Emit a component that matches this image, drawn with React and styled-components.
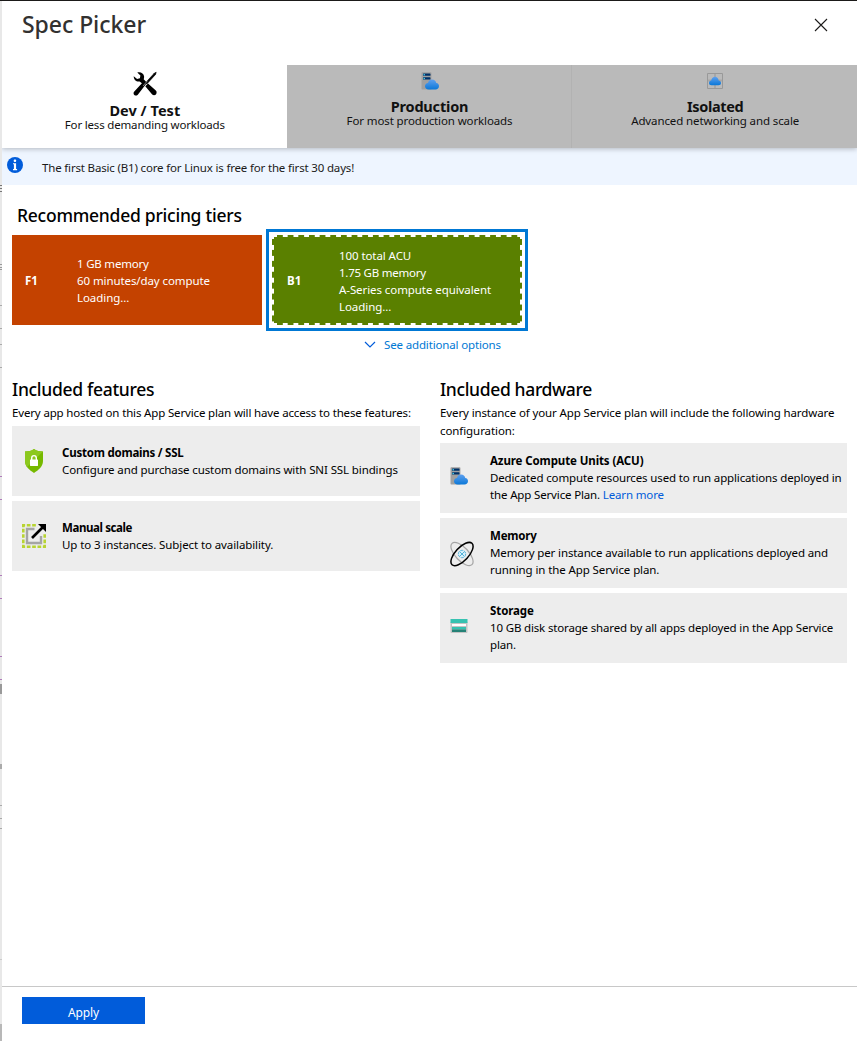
import React from "react";
import styled, { createGlobalStyle } from "styled-components";

const Global = createGlobalStyle`
  * { box-sizing: border-box; }
  html, body { margin: 0; padding: 0; background: #fff; }
  body { font-family: "Noto Sans", "Open Sans", sans-serif; font-size: 11.5px; color: #000; overflow: hidden; }
  h1, h2, h3, p { margin: 0; }
  button { font-family: inherit; }
`;

const underlay = [
  [185, 1, "#777"], [188, 1, "#777"], [191, 1, "#777"],
  [264, 1, "#999"], [267, 1, "#999"], [269, 1, "#999"],
  [305, 1, "#aaa"], [328, 1, "#aaa"], [344, 1, "#aaa"], [367, 1, "#aaa"],
  [476, 1, "#b07cba"], [499, 1, "#b07cba"], [575, 1, "#b07cba"], [598, 1, "#b07cba"],
  [656, 1, "#b07cba"], [679, 1, "#b07cba"], [684, 10, "#999"], [764, 5, "#aaa"],
  [805, 1, "#aaa"], [818, 1, "#aaa"], [828, 1, "#aaa"], [959, 1, "#ccc"], [1024, 17, "#b8b8b8"],
];

const stops = underlay
  .map(([y, h, c]) => `transparent ${y}px, ${c} ${y}px, ${c} ${y + h}px, transparent ${y + h}px`)
  .join(", ");

const Page = styled.div`
  display: flex;
  width: 857px;
  height: 1041px;
  border-top: 1px solid #1b1a19;
`;
const Edge = styled.div`
  flex: 0 0 2px;
  background: linear-gradient(to bottom, ${stops}) 0 -1px / 2px 1041px no-repeat, #e8e8e8;
`;
const Blade = styled.main`
  flex: 1;
  display: flex;
  flex-direction: column;
  background: #fff;
`;
const Header = styled.header`
  display: flex;
  justify-content: space-between;
  height: 64px;
  padding: 7px 29px 0 20px;
`;
const Title = styled.h1`
  font-size: 23px;
  line-height: 32px;
  font-weight: 500;
  color: #323130;
  letter-spacing: -0.05px;
`;
const CloseButton = styled.button`
  width: 14px;
  height: 14px;
  margin-top: 10px;
  padding: 0;
  border: 0;
  background: none;
  svg { display: block; }
`;
const Tabs = styled.nav`
  position: relative;
  display: flex;
  height: 83px;
  box-shadow: 0 1px 5px rgba(0, 0, 0, 0.25);
  clip-path: inset(0 0 -8px 0);
`;
const Tab = styled.button`
  flex: 1 0 0;
  display: flex;
  flex-direction: column;
  align-items: center;
  padding: ${(p) => (p.$active ? 6 : 7)}px 0 0 1px;
  border: 0;
  border-right: ${(p) => (p.$divider ? "1px solid #b2b2b2" : "0")};
  background: ${(p) => (p.$active ? "#fff" : "#bababa")};
  color: #111;
`;
const TabName = styled.span`
  margin-top: ${(p) => (p.$active ? 5 : 8)}px;
  font-size: 14.5px;
  font-weight: 700;
  line-height: 16px;
  letter-spacing: ${(p) => p.$ls || 0}px;
`;
const TabText = styled.span`
  margin-top: -1px;
  font-size: 11.5px;
  line-height: 16px;
  letter-spacing: ${(p) => p.$ls || 0}px;
`;
const Notice = styled.div`
  display: flex;
  align-items: flex-start;
  height: 37px;
  padding: 8px 0 0 5px;
  background: #eef5ff;
  svg { display: block; }
`;
const NoticeText = styled.span`
  margin: 3px 0 0 19px;
  line-height: 17px;
  color: #1b1a19;
  letter-spacing: -0.17px;
`;
const Content = styled.section`
  flex: 1;
  padding: 17px 10px 0;
`;
const Heading = styled.h2`
  font-size: 17.5px;
  line-height: 26px;
  font-weight: 500;
  color: #000;
  padding-left: ${(p) => p.$indent || 0}px;
  letter-spacing: ${(p) => p.$ls || 0}px;
`;
const Tiers = styled.div`
  display: flex;
  gap: 4px;
  margin-top: 1px;
`;
const TierFrame = styled.div`
  margin: ${(p) => (p.$selected ? "0" : "6px 0")};
  padding: ${(p) => (p.$selected ? "3px" : "0")};
  border: ${(p) => (p.$selected ? "3px solid #0078d4" : "0")};
`;
const Tier = styled.div`
  display: flex;
  align-items: center;
  width: 250px;
  height: 90px;
  color: #fff;
  background: ${(p) => p.$bg};
`;
const SelectedTier = styled(Tier)`
  padding: 0 2px;
  background:
    linear-gradient(to right, transparent 5.5px, #fff 5.5px) 5px 0 / 10.66px 2px repeat-x,
    linear-gradient(to right, transparent 5.5px, #fff 5.5px) 5px 100% / 10.66px 2px repeat-x,
    linear-gradient(to bottom, transparent 5.5px, #fff 5.5px) 0 4px / 2px 10.93px repeat-y,
    linear-gradient(to bottom, transparent 5.5px, #fff 5.5px) 100% 4px / 2px 10.93px repeat-y,
    ${(p) => p.$bg};
`;
const TierCode = styled.strong`
  width: 65px;
  padding-left: 13px;
  font-weight: 700;
  letter-spacing: 0;
`;
const TierSpecs = styled.div`
  display: flex;
  flex-direction: column;
  padding-top: ${(p) => p.$drop || 0}px;
`;
const Line = styled.span`
  display: block;
  line-height: 17px;
  white-space: nowrap;
  letter-spacing: ${(p) => p.$ls ?? -0.14}px;
`;
const More = styled.div`
  display: flex;
  align-items: center;
  gap: 8px;
  height: 17px;
  margin: 5px 0 0 352px;
  color: #0078d4;
`;
const Columns = styled.div`
  display: flex;
  justify-content: space-between;
  margin-top: 23px;
`;
const Column = styled.div`
  width: ${(p) => p.$w}px;
`;
const Intro = styled.div`
  margin: 2px 0 ${(p) => p.$gap}px;
`;
const IntroLine = styled(Line)`
  line-height: 18px;
`;
const Card = styled.article`
  display: flex;
  align-items: center;
  height: 70px;
  margin-bottom: 5px;
  padding-bottom: ${(p) => (p.$tall ? 1 : 0)}px;
  background: #ededed;
`;
const IconCell = styled.div`
  flex: 0 0 50px;
  padding: ${(p) => p.$drop || 0}px 0 ${(p) => p.$raise || 0}px 10px;
  svg { display: block; }
`;
const CardName = styled(Line)`
  font-weight: 700;
`;
const Link = styled.a`
  color: #015cda;
`;
const Footer = styled.footer`
  height: 55px;
  padding: 10px 20px;
  border-top: 1px solid #c8c8c8;
`;
const Apply = styled.button`
  display: block;
  width: 123px;
  height: 27px;
  padding: 4px 0 0;
  border: 0;
  background: #015cda;
  color: #fff;
  font-size: 12px;
  letter-spacing: -0.1px;
`;

const ToolsIcon = () => (
  <svg width="24" height="26" viewBox="0 0 24 26">
    <path d="M12.300 15.300 15 12.500l7.800 7.100c1.100 1 1.100 2.700.1 3.800s-2.700 1.100-3.700 0z" fill="#000" />
    <path d="M21.300 2.200 23.200 1.200l-.6 2.200L13.800 13l-1.300-1.200z" fill="#000" stroke="#000" strokeWidth=".6" />
    <path d="M4.300 1.400C7.700.6 10.900 2.300 11.100 5.600c.1 1-.1 1.900-.4 2.700l3.300 3.400L4.800 23.700c-1 1.100-2.500 1.200-3.500.3-1-1-1-2.500 0-3.500l7.600-8.200-2.300-1.900C3.800 11.200.8 9 .7 5.200l3.400 2.700L6.900 7.200l.5-2.800z" fill="#000" />
    <path d="M14.500 9.800 10 15" stroke="#fff" strokeWidth=".5" />
  </svg>
);

const ServerCloud = ({ id }) => (
  <svg width="18" height="18" viewBox="0 0 18 18">
    <defs>
      <linearGradient id={id} x1="0" y1="0" x2="0" y2="1">
        <stop offset="0" stopColor="#5ea0ef" />
        <stop offset="1" stopColor="#0b78d8" />
      </linearGradient>
    </defs>
    <path d="M.5 1Q.5.300 1.200.3H9.700Q10.400.3 10.400 1V17.500H1.200Q.5 17.500 .5 16.800z" fill="#a0a0a0" />
    <rect x="2" y="1.500" width="7.500" height="2.300" rx=".6" fill="#003067" />
    <rect x="2" y="5.300" width="7.500" height="2.300" rx=".6" fill="#003067" />
    <circle cx="3.200" cy="2.650" r=".75" fill="#50e6ff" />
    <circle cx="3.200" cy="6.450" r=".75" fill="#50e6ff" />
    <path d="M7.600 17.500C5.500 17.500 4 16 4 14.200c0-1.900 1.300-3.100 3-3.300C7.500 8.700 9.100 7.500 11.100 7.500c2.200 0 3.700 1.300 4.200 3.400 1.700.2 2.700 1.600 2.700 3.200 0 2-1.500 3.400-3.500 3.400z" fill={`url(#${id})`} />
  </svg>
);

const IsolatedIcon = () => (
  <svg width="18" height="18" viewBox="0 0 18 18">
    <defs>
      <linearGradient id="iso" x1="0" y1="0" x2="0" y2="1">
        <stop offset="0" stopColor="#5ea0ef" />
        <stop offset="1" stopColor="#0b78d8" />
      </linearGradient>
    </defs>
    <path d="M9 1v16M1 8.500h16" stroke="#a8a8a8" strokeWidth="2" />
    <path d="M1.500 1.500h15v15h-15z" stroke="#999" fill="none" />
    <path d="M5.500 13.200C4 13.200 3 12.200 3 10.900c0-1.200.9-2.200 2.200-2.400C5.800 6 7.200 4.800 9 4.800s3.200 1.200 3.700 3.600c1.400.2 2.300 1.200 2.300 2.500s-1 2.300-2.600 2.300z" fill="url(#iso)" />
  </svg>
);

const InfoIcon = () => (
  <svg width="16" height="18" viewBox="2 0 16 18">
    <circle cx="10" cy="9" r="8" fill="#015cda" />
    <rect x="8.700" y="3.500" width="2.500" height="2.500" rx="1" fill="#fff" />
    <path d="M8 7.200h3.100V13h1v1.200H8V13h.9V8.300H8z" fill="#fff" />
  </svg>
);

const ShieldIcon = () => (
  <svg width="24" height="26" viewBox="0 0 24 26">
    <path d="M12 1c2.500 1.800 5.500 2.400 9 2.600V13c0 5.500-4.500 9-9 12-4.500-3-9-6.500-9-12V3.600C6.500 3.400 9.500 2.800 12 1z" fill="#76b900" />
    <path d="M12 1c2.500 1.800 5.500 2.400 9 2.600L5 19c-1.300-1.700-2-3.700-2-6V3.600C6.500 3.400 9.500 2.800 12 1z" fill="#8cc81e" />
    <rect x="8" y="11.500" width="8" height="6.500" rx=".4" fill="#fff" />
    <path d="M9.700 12v-2.100a2.300 2.300 0 0 1 4.600 0V12" stroke="#fff" strokeWidth="1.400" fill="none" />
  </svg>
);

const ScaleIcon = () => (
  <svg width="24" height="24" viewBox="0 0 24 24">
    <path d="M1.300 1.300h21.400v21.400H1.300z" fill="none" stroke="#b8d432" strokeWidth="2.600" strokeDasharray="3.700 1.650" strokeDashoffset="1.850" />
    <path d="M15 0h9v9h-5L15 5z" fill="#ededed" />
    <path d="M12.500 5H5v14h14v-7" fill="none" stroke="#a5a5a5" strokeWidth="2.400" />
    <path d="m10 14 10.500-10.500" stroke="#000" strokeWidth="2.700" />
    <path d="M16 0h8v8z" fill="#000" />
  </svg>
);

const MemoryIcon = () => (
  <svg width="24" height="26" viewBox="0 0 24 26">
    <ellipse cx="12" cy="13" rx="6.600" ry="14.600" transform="rotate(-43 12 13)" fill="none" stroke="#a5a5a5" strokeWidth="1.200" />
    <circle cx="12" cy="13" r="3.700" fill="#d8f0fa" stroke="#59b4d9" strokeWidth="1" strokeDasharray="3 .8" />
    <path d="m10 11 4 4M14 11l-4 4" stroke="#59b4d9" strokeWidth="1" />
    <ellipse cx="12" cy="13" rx="6.600" ry="14.600" transform="rotate(43 12 13)" fill="none" stroke="#000" strokeWidth="1.500" />
  </svg>
);

const StorageIcon = () => (
  <svg width="18" height="18" viewBox="0 0 18 18">
    <path d="M.5 5H17.500v10q0 1-1 1H1.500q-1 0-1-1z" fill="#c4c4c4" />
    <rect x=".5" y="2" width="17" height="4" fill="#37c2b1" />
    <rect x="2" y="7" width="14" height="2" fill="#fff" />
    <rect x="2" y="10" width="14" height="2.500" fill="#37c2b1" />
    <rect x="2" y="12.500" width="14" height="2.500" fill="#258277" />
  </svg>
);

export default function App() {
  return (
    <>
      <Global />
      <Page>
        <Edge />
        <Blade>
          <Header>
            <Title>Spec Picker</Title>
            <CloseButton aria-label="Close">
              <svg width="14" height="14" viewBox="0 0 14 14">
                <path d="m1 1 12 12M13 1 1 13" stroke="#1b1a19" strokeWidth="1.100" />
              </svg>
            </CloseButton>
          </Header>
          <Tabs>
            <Tab $active>
              <ToolsIcon />
              <TabName $active $ls={0.05}>Dev / Test</TabName>
              <TabText $ls={-0.18}>For less demanding workloads</TabText>
            </Tab>
            <Tab $divider>
              <ServerCloud id="prod" />
              <TabName $ls={-0.18}>Production</TabName>
              <TabText $ls={-0.12}>For most production workloads</TabText>
            </Tab>
            <Tab>
              <IsolatedIcon />
              <TabName $ls={-0.33}>Isolated</TabName>
              <TabText $ls={-0.11}>Advanced networking and scale</TabText>
            </Tab>
          </Tabs>
          <Notice>
            <InfoIcon />
            <NoticeText>The first Basic (B1) core for Linux is free for the first 30 days!</NoticeText>
          </Notice>
          <Content>
            <Heading $indent={5} $ls={-0.25}>Recommended pricing tiers</Heading>
            <Tiers>
              <TierFrame>
                <Tier $bg="#c44200">
                  <TierCode>F1</TierCode>
                  <TierSpecs>
                    <Line $ls={-0.21}>1 GB memory</Line>
                    <Line $ls={-0.09}>60 minutes/day compute</Line>
                    <Line $ls={-0.06}>Loading...</Line>
                  </TierSpecs>
                </Tier>
              </TierFrame>
              <TierFrame $selected>
                <SelectedTier $bg="#5a8000">
                  <TierCode>B1</TierCode>
                  <TierSpecs $drop={2}>
                    <Line $ls={-0.08}>100 total ACU</Line>
                    <Line $ls={-0.24}>1.75 GB memory</Line>
                    <Line $ls={-0.08}>A-Series compute equivalent</Line>
                    <Line $ls={-0.06}>Loading...</Line>
                  </TierSpecs>
                </SelectedTier>
              </TierFrame>
            </Tiers>
            <More>
              <svg width="12" height="8" viewBox="0 0 12 8">
                <path d="m1 1 5 5 5-5" stroke="#015cda" strokeWidth="1.200" fill="none" />
              </svg>
              <Line $ls={-0.15}>See additional options</Line>
            </More>
            <Columns>
              <Column $w={408}>
                <Heading $ls={-0.3}>Included features</Heading>
                <Intro $gap={4}>
                  <IntroLine $ls={-0.155}>Every app hosted on this App Service plan will have access to these features:</IntroLine>
                </Intro>
                <Card>
                  <IconCell><ShieldIcon /></IconCell>
                  <div>
                    <CardName $ls={-0.23}>Custom domains / SSL</CardName>
                    <Line $ls={-0.11}>Configure and purchase custom domains with SNI SSL bindings</Line>
                  </div>
                </Card>
                <Card>
                  <IconCell><ScaleIcon /></IconCell>
                  <div>
                    <CardName $ls={-0.4}>Manual scale</CardName>
                    <Line $ls={-0.1}>Up to 3 instances. Subject to availability.</Line>
                  </div>
                </Card>
              </Column>
              <Column $w={407}>
                <Heading $ls={-0.35}>Included hardware</Heading>
                <Intro $gap={3}>
                  <IntroLine $ls={-0.115}>Every instance of your App Service plan will include the following hardware</IntroLine>
                  <IntroLine $ls={-0.08}>configuration:</IntroLine>
                </Intro>
                <Card $tall>
                  <IconCell $raise={4}><ServerCloud id="acu" /></IconCell>
                  <div>
                    <CardName $ls={-0.11}>Azure Compute Units (ACU)</CardName>
                    <Line $ls={-0.14}>Dedicated compute resources used to run applications deployed in</Line>
                    <Line $ls={-0.15}>the App Service Plan. <Link>Learn more</Link></Line>
                  </div>
                </Card>
                <Card $tall>
                  <IconCell $drop={2}><MemoryIcon /></IconCell>
                  <div>
                    <CardName $ls={-0.2}>Memory</CardName>
                    <Line $ls={-0.13}>Memory per instance available to run applications deployed and</Line>
                    <Line $ls={-0.1}>running in the App Service plan.</Line>
                  </div>
                </Card>
                <Card $tall>
                  <IconCell $raise={4}><StorageIcon /></IconCell>
                  <div>
                    <CardName $ls={-0.1}>Storage</CardName>
                    <Line $ls={-0.16}>10 GB disk storage shared by all apps deployed in the App Service</Line>
                    <Line $ls={-0.15}>plan.</Line>
                  </div>
                </Card>
              </Column>
            </Columns>
          </Content>
          <Footer>
            <Apply>Apply</Apply>
          </Footer>
        </Blade>
      </Page>
    </>
  );
}
